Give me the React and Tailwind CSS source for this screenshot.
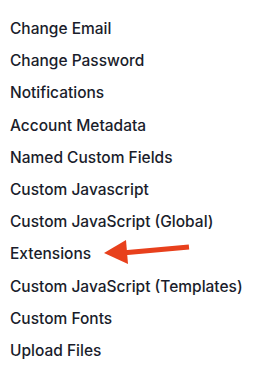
import React from 'react';

const items = [
  'Change Email',
  'Change Password',
  'Notifications',
  'Account Metadata',
  'Named Custom Fields',
  'Custom Javascript',
  'Custom JavaScript (Global)',
  'Extensions',
  'Custom JavaScript (Templates)',
  'Custom Fonts',
  'Upload Files',
];

const App = () => {
  return (
    <div className="relative w-[269px] h-[372px] bg-white overflow-hidden">
      <ul className="flex flex-col pt-[13px] pl-[10px]" style={{ fontFamily: 'Inter, "Liberation Sans", sans-serif' }}>
        {items.map((item) => (
          <li key={item} className="h-[32.2px] leading-[32.2px] text-[15.5px] font-medium text-[#1a1d2b]">
            {item}
          </li>
        ))}
      </ul>

      {/* Annotation arrow */}
      <svg className="absolute left-0 top-0" width="269" height="372" viewBox="0 0 269 372">
        <line x1="189" y1="247" x2="122" y2="253" stroke="#e8401c" strokeWidth="5" />
        <polygon points="104,253 126,240 128,264" fill="#e8401c" />
      </svg>
    </div>
  );
};

export default App;
